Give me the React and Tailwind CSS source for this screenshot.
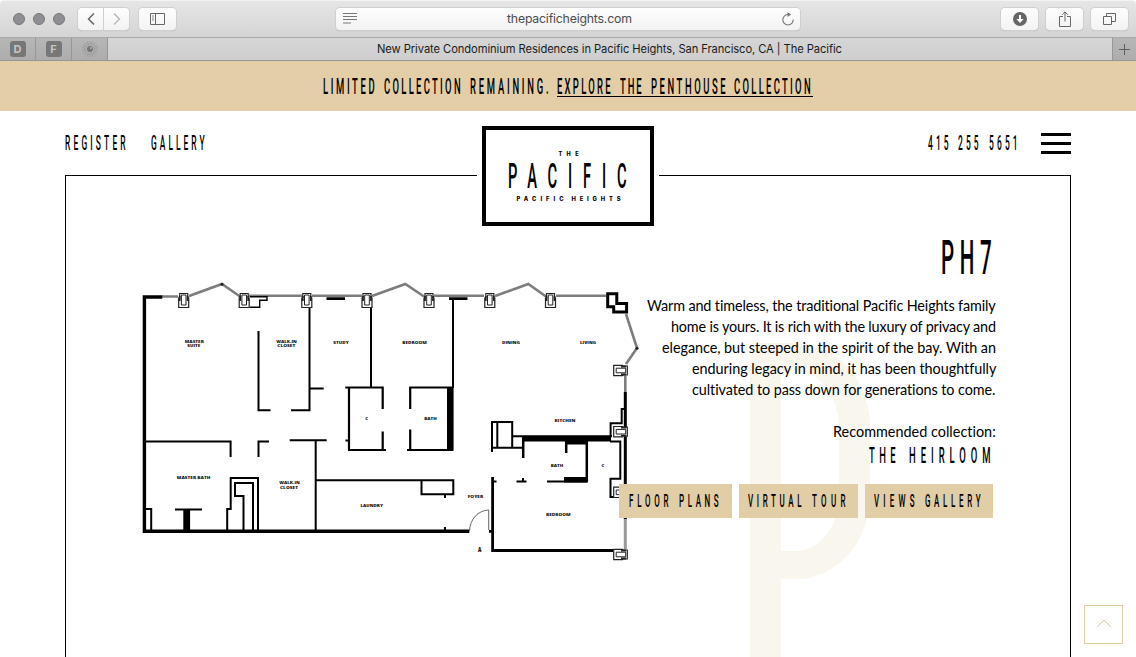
import React, { useLayoutEffect, useRef, useState } from "react";

// Spreads the letters of a run of text over the width of its box.
function Fit({ children, className = "", scale = 1, trim = 0 }) {
  const box = useRef(null);
  const run = useRef(null);
  const [spacing, setSpacing] = useState(0);
  useLayoutEffect(() => {
    const n = children.length;
    if (n < 2) return;
    run.current.style.letterSpacing = "0px";
    const natural = run.current.getBoundingClientRect().width / scale;
    const target = (box.current.getBoundingClientRect().width - trim) / scale;
    const value = (target - natural) / (n - 1);
    run.current.style.letterSpacing = value + "px";
    setSpacing(value);
  }, [children, scale, trim]);
  return (
    <span ref={box} className={"block shrink-0 whitespace-nowrap " + className}>
      <span
        ref={run}
        className="inline-block origin-left"
        style={{ letterSpacing: spacing + "px", transform: scale === 1 ? undefined : `scaleX(${scale})` }}
      >
        {children}
      </span>
    </span>
  );
}

function Tall({ children, className = "" }) {
  return (
    <Fit scale={0.42} trim={1.4} className={"font-[Roboto,sans-serif] font-medium text-black " + className}>
      {children}
    </Fit>
  );
}

const toolButton =
  "flex h-[22px] items-center rounded-[4px] bg-linear-to-b from-[#fefefe] to-[#f3f3f3] shadow-[0_0_0_1px_#cfcfcf,0_1px_1px_#a8a8a8] text-[#6c6c6c]";

function Toolbar() {
  return (
    <div className="flex h-[37px] items-center rounded-t-[4px] border-t border-[#f3f3f3] bg-linear-to-b from-[#e6e6e6] to-[#d4d4d4] pb-px">
      <div className="flex gap-2 pl-[13px]">
        <i className="size-3 rounded-full border border-[#77777a] bg-[#8e8e93]" />
        <i className="size-3 rounded-full border border-[#77777a] bg-[#8e8e93]" />
        <i className="size-3 rounded-full border border-[#77777a] bg-[#8e8e93]" />
      </div>
      <div className="ml-[13px] flex gap-px">
        <div className={toolButton + " w-[25px] justify-center rounded-r-none"}>
          <svg width="8" height="14" viewBox="0 0 8 14" fill="none" stroke="#666" strokeWidth="1.5"><path d="M7 1.5 1.5 7 7 12.5" /></svg>
        </div>
        <div className={toolButton + " w-[25px] justify-center rounded-l-none"}>
          <svg width="8" height="14" viewBox="0 0 8 14" fill="none" stroke="#b9b9b9" strokeWidth="1.5"><path d="M1 1.5 6.500 7 1 12.500" /></svg>
        </div>
      </div>
      <div className={toolButton + " ml-[10px] w-[37px] justify-center"}>
        <svg width="15" height="12" viewBox="0 0 15 12" fill="none" stroke="#666">
          <path d="M.5.5h14v11H.5zM5.500.5v11" /><path d="M2 3h2M2 5h2M2 7h2" stroke="#8a8a8a" />
        </svg>
      </div>
      <div className={toolButton + " ml-[160px] w-[464px] justify-between pr-[6px] pl-[7px]"}>
        <svg width="14" height="11" viewBox="0 0 14 11" stroke="#777"><path d="M0 .5h14M0 3.500h14M0 6.500h14M0 10h8" /></svg>
        <Fit className="w-[125px] font-[Inter,sans-serif] text-[12.3px] leading-[22px] text-[#4c4c4c]">thepacificheights.com</Fit>
        <svg width="12" height="14" viewBox="0 0 12 14" fill="none" stroke="#777" strokeWidth="1.1">
          <path d="M11.200 7.500A5.200 5.200 0 1 1 6.500 2.600" /><path d="M5.500.2 9.200 2.600 5.500 5z" fill="#777" stroke="none" />
        </svg>
      </div>
      <div className="ml-auto flex gap-2 pr-2">
        <div className={toolButton + " w-[37px] justify-center"}>
          <svg width="14" height="14" viewBox="0 0 14 14"><circle cx="7" cy="7" r="7" fill="#666" /><path d="M6 3h2v4h2.600L7 11 3.400 7H6z" fill="#fafafa" /></svg>
        </div>
        <div className={toolButton + " w-[37px] justify-center"}>
          <svg width="12" height="16" viewBox="0 0 12 16" fill="none" stroke="#666"><path d="M4 5.500H.5v10h11v-10H8M6 10.500V1M3.200 3.700 6 .9l2.800 2.800" /></svg>
        </div>
        <div className={toolButton + " w-[37px] justify-center"}>
          <svg width="13" height="12" viewBox="0 0 13 12" fill="none" stroke="#666"><path d="M.5 3.500h8v8h-8zM3.500 3.500v-3h9v8h-4" /></svg>
        </div>
      </div>
    </div>
  );
}

const pinnedTab = "flex w-9 items-center justify-center border-r border-[#979797] bg-linear-to-b from-[#b6b6b6] to-[#adadad]";
const rays = [0, 20, 40, 60, 80, 100, 120, 140, 160, 180, 200, 220, 240, 260, 280, 300, 320, 340];

function TabBar() {
  return (
    <div className="flex h-6 border-y border-t-[#a9a9a9] border-b-[#969696] font-[Inter,sans-serif]">
      <div className={pinnedTab}><b className="size-4 rounded-[3px] bg-[#777] text-center text-[11px] leading-4 text-[#c4c4c4]">D</b></div>
      <div className={pinnedTab}><b className="size-4 rounded-[3px] bg-[#777] text-center text-[11px] leading-4 text-[#c4c4c4]">F</b></div>
      <div className={pinnedTab}>
        <svg width="16" height="16" viewBox="-8 -8 16 16">
          {rays.map((a) => (
            <path key={a} d="M0-4V-8" stroke="#959595" strokeWidth=".8" transform={`rotate(${a})`} />
          ))}
          <circle r="3" fill="#747474" /><circle cx="1" cy="-1" r="1" fill="#b5b5b5" />
        </svg>
      </div>
      <div className="flex flex-1 bg-linear-to-b from-[#d6d6d6] to-[#cecece] pl-[269px]">
        <Fit className="w-[465px] text-[11.2px] leading-[22px] text-[#1b1b1b]">New Private Condominium Residences in Pacific Heights, San Francisco, CA | The Pacific</Fit>
      </div>
      <div className="flex w-6 items-center justify-center border-l border-[#979797] bg-linear-to-b from-[#b6b6b6] to-[#adadad]">
        <svg width="11" height="11" viewBox="0 0 11 11" stroke="#5f5f5f"><path d="M5.500 0v11M0 5.500h11" /></svg>
      </div>
    </div>
  );
}

function Banner() {
  return (
    <div className="flex h-[50px] shrink-0 bg-[#e3cea8] pt-[10px] pl-[323px] text-[22.5px] leading-[30px]">
      <Tall className="mr-[8px] w-[53px]">LIMITED</Tall>
      <Tall className="mr-[8px] w-[78px]">COLLECTION</Tall>
      <Tall className="mr-[7px] w-[80px]">REMAINING.</Tall>
      <div className="flex h-[26px] w-[256px] border-b border-black">
        <Tall className="mr-[8px] w-[55px]">EXPLORE</Tall>
        <Tall className="mr-[8px] w-[23px]">THE</Tall>
        <Tall className="mr-[7px] w-[76px]">PENTHOUSE</Tall>
        <Tall className="w-[78px]">COLLECTION</Tall>
      </div>
    </div>
  );
}

function Logo() {
  return (
    <div className="absolute top-[15px] left-[477px] flex w-[182px] justify-center bg-white">
      <div className="flex h-[100px] w-[172px] flex-col items-center border-4 border-black">
        <Fit className="mt-[20px] ml-px w-[20px] font-[Inter,sans-serif] text-[5.5px] leading-[8px] font-extrabold text-black">THE</Fit>
        <Tall className="mt-0 w-[120px] text-[35px] leading-[38px]">PACIFIC</Tall>
        <div className="-mt-px flex gap-2 pl-px font-[Inter,sans-serif] text-[5.8px] leading-[8px] font-extrabold text-black">
          <Fit className="w-[47px]">PACIFIC</Fit>
          <Fit className="w-[49px]">HEIGHTS</Fit>
        </div>
      </div>
    </div>
  );
}

const columns = [183.7, 244.2, 306.8, 367, 429, 489.8, 550.5];
const sideColumns = [370.5, 431.7, 492.3, 554.5];
const labels = [
  ["MASTER", 194.3, 342.8, 19], ["SUITE", 193.8, 346.8, 13], ["WALK-IN", 286.5, 342.8, 20.5], ["CLOSET", 286.3, 346.8, 18],
  ["STUDY", 341, 344.4, 15.5], ["BEDROOM", 414.5, 344.4, 24.5], ["DINING", 511, 344.4, 18], ["LIVING", 588, 344.4, 16],
  ["C", 366.7, 420.4, 2.8], ["BATH", 430.5, 420.4, 12.5], ["KITCHEN", 565, 421.6, 21], ["MASTER BATH", 193.6, 479.2, 33.5],
  ["WALK-IN", 289.5, 484.3, 20.5], ["CLOSET", 289, 488.6, 18], ["LAUNDRY", 371.7, 507, 22.5], ["FOYER", 475.5, 497.5, 15.5],
  ["BATH", 557, 466.5, 12.5], ["C", 603, 466.5, 2.8], ["BEDROOM", 558.3, 516, 24.5],
];

function FloorPlan() {
  return (
    <svg className="mt-[94px] ml-16 -mr-10 h-[300px] w-[520px] shrink-0" viewBox="130 270 520 300" fill="none" stroke="#000">
      <g stroke="#7d7d7d" strokeWidth="2.600">
        <path d="M162 296.500H178M189 296 222 284 240 296.500M249 295.700H302M312 295.700H362M372 296 405.300 284 424 296.500M434 295.700H484M495 296 528.300 284 546 296.500M556 295.700H606" />
        <path d="M626 314 637 348 626 364M625.300 376V392" />
        <path d="M625.300 518V549" strokeWidth="3" stroke="#999" />
      </g>
      <circle cx="222" cy="284.300" r="1.500" fill="#222" stroke="none" />
      <circle cx="637" cy="348.300" r="1.500" fill="#222" stroke="none" />
      <path strokeWidth="3.400" d="M162.300 297H144.400V531.300H469.300" />
      <path strokeWidth="1.400" d="M250 296.700H267V300.300H259.700V307.300H250" />
      <path strokeWidth="2.800" d="M326.500 298.600H345M449 298.600H467.500" />
      <path strokeWidth="2" d="M258.500 331V410.300H270.500M291 410.300H309.500V307M309.500 388.400H323.700M371 307V387M453 298V388" />
      <path strokeWidth="2.200" d="M345.300 387.500H382.700V409M349 387V450M345.500 440.500H349M382.700 431.500V450M348 450H386M410.200 409V387.500H453M410.200 429.500V450M407 450H453" />
      <path fill="#000" stroke="none" d="M447 387h6.600v63.800H447zM183.300 509h6.800v22h-6.800z" />
      <path strokeWidth="2" d="M146 441.500H230.600V457M258.500 457V441.500H269M289.700 440.300H326.700M315.700 440V531M146 509H151.200V531M175 509.500H202M227.200 531V509H230.700V478H258V531M253 531V483H235V496H243.500V531" />
      <path strokeWidth="2" d="M316 480.300H453.300V494.300H421.500V480.500M445 494V498M445 527V531" />
      <path stroke="#666" strokeWidth="1" d="M469.500 531C470 519 478 510.500 488.700 510V530" />
      <path strokeWidth="2.800" d="M489 531.300H493M492.600 477V550.500H613.500" />
      <path strokeWidth="2" d="M492 481.500H496.500M516.500 481.500H526.500M523 478V482M547 481.500H587.500M492 422H512.200V447.700M492 421V452M497.300 422V447.700M491.500 447.700H523M512 436.200H612" />
      <path fill="#000" stroke="none" d="M522 436.500h89v5h-89zM566 441h21v3.500h-21zM564 477h23.500v5.500H564z" />
      <path strokeWidth="2.500" d="M523.200 437V458M566.200 441V453M586.800 441V482" />
      <path strokeWidth="2" d="M610 441.500H620.300V478.700H610.500V497H620M625 409H621.700V423.200H610.600V437" />
      <path strokeWidth="3" d="M625.300 392V519" />
      <path strokeWidth="3" fill="#fff" d="M607.700 293.700H616.800V303.500H626.600V312H613.700V306.700H607.700Z" />
      {columns.map((x) => (
        <g key={x} stroke="#222" strokeWidth="1.200" fill="#fff">
          <path d={`M${x - 5} 297.500v10h10v-10`} />
          <path d={`M${x - 4} 298v-4.500h8v4.500`} />
          <path d={`M${x - 4} 296v5M${x + 4} 296v5`} strokeWidth="1.800" />
          <path d={`M${x - 2.3} 295h4.600v10h-4.600z`} strokeWidth="1" />
        </g>
      ))}
      {sideColumns.map((y) => (
        <g key={y} stroke="#222" strokeWidth="1.200" fill="#fff">
          <path d={`M623 ${y - 5.2}h-9.300v10.400h9.300`} />
          <path d={`M622 ${y - 4.5}h5.300v9h-5.300`} />
          <path d={`M621 ${y - 4}h5M621 ${y + 4}h5`} strokeWidth="1.800" />
          <path d={`M616.200 ${y - 2.3}h9.500v4.600h-9.500z`} strokeWidth="1" />
        </g>
      ))}
      <g fill="#111" stroke="none" className="font-['Open_Sans',sans-serif] text-[4.2px] font-extrabold" textAnchor="middle">
        {labels.map(([t, x, y, w]) => (
          <text key={t + x} x={x} y={y} textLength={w} lengthAdjust="spacingAndGlyphs">{t}</text>
        ))}
        <text x="479.6" y="551.500" className="text-[6.5px]" textLength="3.4" lengthAdjust="spacingAndGlyphs">A</text>
      </g>
    </svg>
  );
}

function Monogram() {
  return (
    <div className="absolute top-[232px] left-[750px] flex h-[314px] w-[120px]">
      <i className="w-[31px] bg-[#f9f6ed]" />
      <i className="-ml-[31px] h-[236px] w-[120px] rounded-tr-[74px_84px] rounded-br-[74px_84px] border-y-[28px] border-r-[31px] border-[#f9f6ed]" />
    </div>
  );
}

const action = "flex h-[34px] gap-[9px] bg-[#e1cda6] text-[19px] leading-[33px]";

function Details() {
  return (
    <div className="relative flex flex-1 flex-col items-end pr-[74px] font-[Lato,sans-serif] text-[14.4px] leading-[21px] text-black">
      <Tall className="mt-[61px] mr-[3px] w-[52px] text-[49px] leading-[42px]">PH7</Tall>
      <div className="mt-4 flex flex-col items-end">
        <Fit className="w-[349px]">Warm and timeless, the traditional Pacific Heights family</Fit>
        <Fit className="w-[325px]">home is yours. It is rich with the luxury of privacy and</Fit>
        <Fit className="w-[334px]">elegance, but steeped in the spirit of the bay. With an</Fit>
        <Fit className="w-[304px]">enduring legacy in mind, it has been thoughtfully</Fit>
        <Fit className="w-[304px]">cultivated to pass down for generations to come.</Fit>
      </div>
      <Fit className="mt-[21px] w-[163px]">Recommended collection:</Fit>
      <div className="mr-[4px] flex gap-[12px] text-[22.5px] leading-[26px]">
        <Tall className="w-[28px]">THE</Tall>
        <Tall className="w-[83px]">HEIRLOOM</Tall>
      </div>
      <div className="mt-4 mr-[3px] flex gap-[7px]">
        <div className={action + " w-[113px] pl-[10px]"}>
          <Tall className="w-[41px]">FLOOR</Tall><Tall className="w-[41px]">PLANS</Tall>
        </div>
        <div className={action + " w-[119px] pl-[9px]"}>
          <Tall className="w-[55px]">VIRTUAL</Tall><Tall className="w-[35px]">TOUR</Tall>
        </div>
        <div className={action + " w-[128px] pl-[9px]"}>
          <Tall className="w-[42px]">VIEWS</Tall><Tall className="w-[57px]">GALLERY</Tall>
        </div>
      </div>
    </div>
  );
}

export default function App() {
  return (
    <div className="flex h-[657px] w-[1136px] flex-col overflow-hidden bg-white">
      <Toolbar />
      <TabBar />
      <Banner />
      <main className="relative flex flex-1 flex-col px-[65px]">
        <Monogram />
        <nav className="flex h-16 text-[20px] leading-[65px]">
          <Tall className="w-[62px]">REGISTER</Tall>
          <Tall className="ml-[24px] w-[55px]">GALLERY</Tall>
          <Tall className="ml-auto w-[22px]">415</Tall>
          <Tall className="ml-[8px] w-[22px]">255</Tall>
          <Tall className="ml-[9px] w-[30px]">5651</Tall>
          <div className="ml-[22px] flex flex-col gap-[6px] pt-[22px]">
            <i className="h-[3px] w-[30px] bg-black" />
            <i className="h-[3px] w-[30px] bg-black" />
            <i className="h-[3px] w-[30px] bg-black" />
          </div>
        </nav>
        <div className="flex flex-1 items-start border border-b-0 border-black">
          <FloorPlan />
          <Details />
        </div>
        <Logo />
        <div className="absolute right-[13px] bottom-[13px] flex size-[39px] items-center justify-center border border-[#e1cda6] bg-white pb-[3px]">
          <svg width="16" height="9" viewBox="0 0 16 9" fill="none" stroke="#dcc79e"><path d="M.8 8.300 8 1l7.200 7.300" /></svg>
        </div>
      </main>
    </div>
  );
}
